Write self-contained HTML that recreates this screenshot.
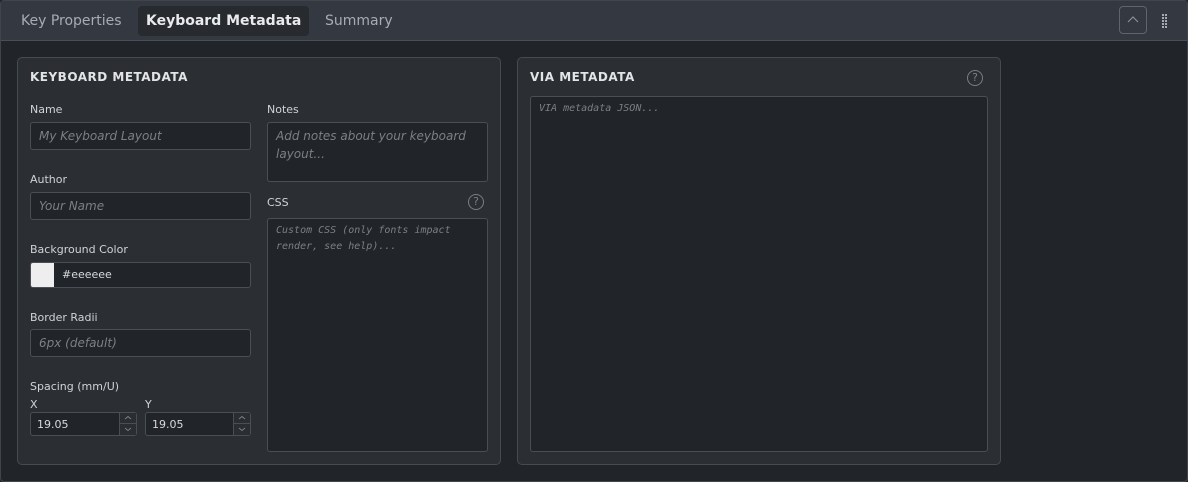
<!DOCTYPE html>
<html><head><style>
*{box-sizing:border-box;margin:0;padding:0}
body{width:1188px;height:482px;background:#212429;font-family:"DejaVu Sans","Liberation Sans",sans-serif;color:#d8dadd;position:relative;overflow:hidden}
.frame{position:absolute;left:0;top:0;width:1188px;height:482px;border:1px solid #40454c;border-radius:4px}
.hdr{position:absolute;left:1px;top:1px;width:1186px;height:40px;background:#343840;border-bottom:1px solid #4a4f57}
.tab{position:absolute;top:5px;height:30px;line-height:30px;font-size:14px;color:#a8acb2;padding:0 8px;border-radius:4px}
.tab.act{background:#272a2f;color:#e8eaec;font-weight:bold}
.abs{position:absolute}
.panel{position:absolute;top:57px;height:408px;background:#2b2f34;border:1px solid #464b52;border-radius:5px}
.ttl{position:absolute;font-size:12px;font-weight:bold;letter-spacing:.5px;color:#e2e4e6}
.lbl{position:absolute;font-size:11px;color:#d0d3d6}
.in{position:absolute;background:#212429;border:1px solid #4a4f56;border-radius:3px;font-size:12px;color:#7c8086;font-style:italic;padding-left:8px}
.mono{font-family:"DejaVu Sans Mono","Liberation Mono",monospace;font-size:10px;font-style:italic;color:#7c8086;line-height:16px}
.q{position:absolute;width:16px;height:16px;border:1.3px solid #7a7e84;border-radius:50%;color:#7a7e84;font-size:11px;text-align:center;line-height:14px}
</style></head><body>
<div class="frame"></div>
<div class="hdr">
<div class="tab" style="left:12px">Key Properties</div>
<div class="tab act" style="left:137px">Keyboard Metadata</div>
<div class="tab" style="left:316px">Summary</div>
<div class="abs" style="left:1118px;top:5px;width:28px;height:28px;border:1px solid #60656c;border-radius:4px">
<svg width="26" height="26" style="position:absolute;left:0;top:0"><path d="M8 15 L13 10 L18 15" stroke="#8a8e94" fill="none" stroke-width="1.2"/></svg></div>
<svg class="abs" style="left:1160px;top:12px" width="8" height="16"><g fill="#a8acb2"><rect x="1" y="1" width="2" height="2"/><rect x="4" y="1" width="2" height="2"/><rect x="1" y="4" width="2" height="2"/><rect x="4" y="4" width="2" height="2"/><rect x="1" y="7" width="2" height="2"/><rect x="4" y="7" width="2" height="2"/><rect x="1" y="10" width="2" height="2"/><rect x="4" y="10" width="2" height="2"/><rect x="1" y="13" width="2" height="2"/><rect x="4" y="13" width="2" height="2"/></g></svg>
</div>

<div class="panel" style="left:17px;width:484px"></div>
<div class="ttl" style="left:30px;top:70px">KEYBOARD METADATA</div>
<div class="lbl" style="left:30px;top:103px">Name</div>
<div class="in" style="left:30px;top:122px;width:221px;height:28px;line-height:26px">My Keyboard Layout</div>
<div class="lbl" style="left:30px;top:173px">Author</div>
<div class="in" style="left:30px;top:192px;width:221px;height:28px;line-height:26px">Your Name</div>
<div class="lbl" style="left:30px;top:243px">Background Color</div>
<div class="in" style="left:30px;top:262px;width:221px;height:26px;padding-left:0;font-style:normal;color:#d8dadd;font-size:11px;line-height:24px">
<span style="position:absolute;left:0;top:0;width:23px;height:24px;background:#eeeeee;border-radius:2px 0 0 2px"></span><span style="position:absolute;left:31px">#eeeeee</span></div>
<div class="lbl" style="left:30px;top:311px">Border Radii</div>
<div class="in" style="left:30px;top:329px;width:221px;height:28px;line-height:26px">6px (default)</div>
<div class="lbl" style="left:30px;top:380px">Spacing (mm/U)</div>
<div class="lbl" style="left:30px;top:398px">X</div>
<div class="lbl" style="left:145px;top:398px">Y</div>
<div class="in" style="left:30px;top:412px;width:107px;height:24px;line-height:23px;font-style:normal;color:#d8dadd;font-size:11px;padding-left:6px">19.05
<span style="position:absolute;right:0;top:0;width:17px;height:22px;border-left:1px solid #4a4f56;background:#2a2d32"><span style="position:absolute;left:0;top:10px;width:16px;border-top:1px solid #4a4f56"></span><svg width="16" height="22" style="position:absolute;left:0;top:0"><path d="M5 6 L8 3.5 L11 6 M5 15 L8 17.5 L11 15" stroke="#7c8086" fill="none"/></svg></span></div>
<div class="in" style="left:145px;top:412px;width:106px;height:24px;line-height:23px;font-style:normal;color:#d8dadd;font-size:11px;padding-left:6px">19.05
<span style="position:absolute;right:0;top:0;width:17px;height:22px;border-left:1px solid #4a4f56;background:#2a2d32"><span style="position:absolute;left:0;top:10px;width:16px;border-top:1px solid #4a4f56"></span><svg width="16" height="22" style="position:absolute;left:0;top:0"><path d="M5 6 L8 3.5 L11 6 M5 15 L8 17.5 L11 15" stroke="#7c8086" fill="none"/></svg></span></div>

<div class="lbl" style="left:267px;top:103px">Notes</div>
<div class="in" style="left:267px;top:122px;width:221px;height:60px;line-height:18px;padding-top:4px">Add notes about your keyboard layout...</div>
<div class="lbl" style="left:267px;top:196px">CSS</div>
<div class="q" style="left:468px;top:194px">?</div>
<div class="in mono" style="left:267px;top:218px;width:221px;height:234px;padding-top:4px">Custom CSS (only fonts impact render, see help)...</div>

<div class="panel" style="left:517px;width:484px"></div>
<div class="ttl" style="left:530px;top:70px">VIA METADATA</div>
<div class="q" style="left:967px;top:70px">?</div>
<div class="in mono" style="left:530px;top:96px;width:458px;height:356px;padding-top:4px">VIA metadata JSON...</div>
</body></html>
